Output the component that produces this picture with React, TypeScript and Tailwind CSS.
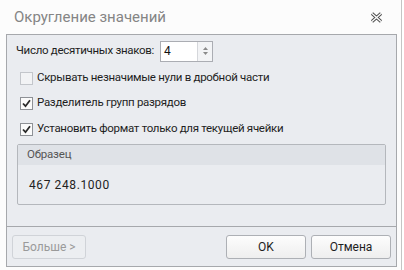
import React from "react";

function Check({ checked, disabled }: { checked?: boolean; disabled?: boolean }) {
  return (
    <div
      className={
        "w-[13px] h-[13px] border flex items-center justify-center " +
        (disabled ? "border-[#c3c6cb] bg-[#f2f3f5]" : "border-[#8e9196] bg-[#fbfbfb]")
      }
    >
      {checked && (
        <svg width="9" height="9" viewBox="0 0 9 9">
          <path d="M1 4.5 L3.5 7.2 L8 1.2" fill="none" stroke="#2a2a2a" strokeWidth="1.8" />
        </svg>
      )}
    </div>
  );
}

function Row({ children, checked, disabled, mt }: { children: React.ReactNode; checked?: boolean; disabled?: boolean; mt: string }) {
  return (
    <div className={"flex items-center h-[20px] pl-[13px] " + mt}>
      <Check checked={checked} disabled={disabled} />
      <span className="ml-[4px] text-[11.5px] tracking-[-0.3px] text-[#1e1e1e]">{children}</span>
    </div>
  );
}

export default function App() {
  return (
    <div className="w-[404px] h-[270px] bg-white" style={{ fontFamily: 'Roboto, "Noto Sans", sans-serif' }}>
      <div className="w-[402px] h-full border-r border-[#c4c4c4] bg-[#fcfcfc]">
        <div className="h-[34px] flex items-center justify-between pl-[14px] pr-[18px]">
          <span className="text-[15px] text-[#858585] leading-none">Округление значений</span>
          <svg width="13" height="11" viewBox="0 0 13 11">
            <path d="M2 1.5 L11 9.5 M11 1.5 L2 9.5" stroke="#4a4a4a" strokeWidth="3.2" />
            <path d="M2 1.5 L11 9.5 M11 1.5 L2 9.5" stroke="#fcfcfc" strokeWidth="1.4" />
          </svg>
        </div>
        <div className="ml-[6px] w-[391px] h-[233px] border border-[#a6a8ac] bg-[#eaecf0] flex flex-col">
          <div className="h-[191px] pt-[6px]">
            <div className="flex items-center h-[20px] pl-[9px]">
              <span className="text-[11.5px] tracking-[-0.3px] text-[#1e1e1e]">Число десятичных знаков:</span>
              <div className="ml-[6px] w-[53px] h-[21px] border border-[#abadb3] bg-white flex">
                <span className="flex-1 pl-[3px] text-[12px] leading-[19px] text-[#111]">4</span>
                <div className="w-[15px] border-l border-[#d5d7db] bg-[#f3f4f6] flex flex-col items-center justify-center gap-[2px]">
                  <svg width="5" height="3" viewBox="0 0 5 3"><path d="M2.5 0 L5 3 L0 3 Z" fill="#8a8a8a" /></svg>
                  <svg width="5" height="3" viewBox="0 0 5 3"><path d="M0 0 L5 0 L2.5 3 Z" fill="#8a8a8a" /></svg>
                </div>
              </div>
            </div>
            <Row disabled mt="mt-[7px]">Скрывать незначимые нули в дробной части</Row>
            <Row checked mt="mt-[5px]">Разделитель групп разрядов</Row>
            <Row checked mt="mt-[6px]">Установить формат только для текущей ячейки</Row>
            <div className="mt-[5px] ml-[10px] w-[369px] h-[61px] border border-[#b4b7bc] rounded-[2px] flex flex-col">
              <div className="h-[20px] bg-[#dfe2e7] pl-[9px] flex items-center text-[11.5px] tracking-[-0.2px] text-[#555]">Образец</div>
              <div className="flex-1 pl-[11px] flex items-center text-[12px] tracking-[0.6px] text-[#222]">467 248.1000</div>
            </div>
          </div>
          <div className="flex-1 border-t border-[#a6a8ac] flex items-center px-[5px] pt-[1px]">
            <div className="w-[74px] h-[24px] border border-[#d0d3d8] rounded-[3px] bg-[#eceef1] flex items-center justify-center text-[12px] text-[#9a9a9a]">Больше &gt;</div>
            <div className="flex-1" />
            <div className="w-[80px] h-[24px] border border-[#adb0b5] rounded-[3px] bg-gradient-to-b from-[#fdfdfd] to-[#eeeeee] flex items-center justify-center text-[12px] text-[#1e1e1e]">OK</div>
            <div className="ml-[5px] w-[80px] h-[24px] border border-[#adb0b5] rounded-[3px] bg-gradient-to-b from-[#fdfdfd] to-[#eeeeee] flex items-center justify-center text-[12px] text-[#1e1e1e]">Отмена</div>
          </div>
        </div>
      </div>
    </div>
  );
}
